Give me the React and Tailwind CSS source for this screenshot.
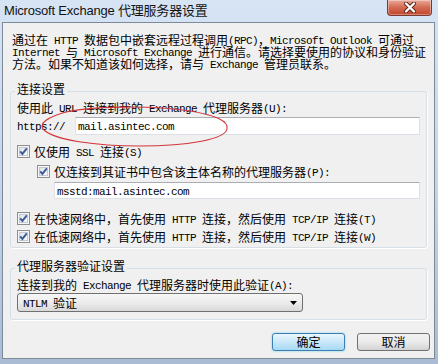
import React from "react"

const Mx = ({ t }) =>
  t.split(/([\x20-\x7e]+)/).map((s, i) =>
    i % 2 ? (
      <span key={i} className="font-['Liberation_Mono',monospace] text-[11px] leading-[0] align-[1px] tracking-[-0.6px]">
        {s}
      </span>
    ) : (
      s
    )
  )

function Check({ className = "" }) {
  return (
    <svg width="13" height="13" viewBox="0 0 13 13" className={"shrink-0 " + className}>
      <defs>
        <linearGradient id="cbg" x1="0" y1="0" x2="1" y2="1">
          <stop offset="0" stopColor="#dfe3e8" />
          <stop offset="1" stopColor="#fbfcfd" />
        </linearGradient>
      </defs>
      <rect x="0.5" y="0.5" width="12" height="12" fill="#f6f6f6" stroke="#8f8f8f" />
      <rect x="2.5" y="2.5" width="8" height="8" fill="url(#cbg)" stroke="#c3cad3" />
      <path d="M3.2 6.4 L5.4 8.9 L9.8 3.4" stroke="#3b5a98" strokeWidth="1.9" fill="none" />
    </svg>
  )
}

function CheckRow({ label, className = "" }) {
  return (
    <div className={"flex items-center h-[13px] leading-[12px] whitespace-nowrap " + className}>
      <Check />
      <span className="ml-[4px]">
        <Mx t={label} />
      </span>
    </div>
  )
}

function TextBox({ value, className = "" }) {
  return (
    <div
      className={
        "flex items-center bg-white border border-[#dbdfe6] border-t-[#abadb3] border-l-[#e2e3ea] pl-[2px] leading-[12px] " +
        className
      }
    >
      <span>
        <Mx t={value} />
      </span>
    </div>
  )
}

function Group({ title, children, className = "" }) {
  return (
    <fieldset
      className={
        "ml-[7px] w-[417px] px-[6px] border border-[#d5dfe5] rounded-[3px] shadow-[1px_1px_0_#ffffff] " + className
      }
    >
      <legend className="ml-[-2px] px-[2px] pb-[4px] leading-[12px]">{title}</legend>
      {children}
    </fieldset>
  )
}

export default function App() {
  return (
    <div className="relative w-[438px] h-[364px] overflow-hidden flex flex-col bg-linear-to-b from-[#d6e4f4] via-[#c3d6ec] to-[#a9bcd4] text-[12px] text-black font-['Noto_Sans_CJK_SC',sans-serif]">
      {/* title bar */}
      <div className="h-[22px] flex items-start justify-between shrink-0">
        <div className="min-w-0 pl-[4px] pt-[3px] text-[13px] leading-[15px] text-[#141414] tracking-[-0.2px] font-['Liberation_Sans','Noto_Sans_CJK_SC',sans-serif] whitespace-nowrap">
          Microsoft Exchange 代理服务器设置
        </div>
        <div className="shrink-0 mr-[6px] w-[45px] h-[16px] flex items-center justify-center rounded-b-[4px] border border-t-0 border-[#7b3a2e] bg-linear-to-b from-[#e9a99b] via-[#d36a52] to-[#c2452a] shadow-[inset_0_0_0_1px_rgba(255,255,255,0.35)]">
          <svg width="14" height="11" viewBox="0 0 14 11">
            <path d="M3 1.5 L11 9.5 M11 1.5 L3 9.5" stroke="#5a1e14" strokeWidth="4" strokeLinecap="round" />
            <path d="M3 1.5 L11 9.5 M11 1.5 L3 9.5" stroke="#ffffff" strokeWidth="2.4" strokeLinecap="round" />
          </svg>
        </div>
      </div>

      {/* body */}
      <div className="relative ml-[2px] w-[433px] h-[337px] border border-[#7f8a99] bg-[#f0f0f0] shrink-0">
        <div className="pt-[11px] pl-[9px] leading-[12px] whitespace-nowrap">
          <div>
            <Mx t="通过在 HTTP 数据包中嵌套远程过程调用(RPC)，Microsoft Outlook 可通过" />
          </div>
          <div>
            <Mx t="Internet 与 Microsoft Exchange 进行通信。请选择要使用的协议和身份验证" />
          </div>
          <div>
            <Mx t="方法。如果不知道该如何选择，请与 Exchange 管理员联系。" />
          </div>
        </div>

        <Group title="连接设置" className="mt-[13px] pb-[4px]">
          <div className="mt-[3px] leading-[12px] whitespace-nowrap">
            <Mx t="使用此 URL 连接到我的 Exchange 代理服务器(U):" />
          </div>
          <div className="mt-[3px] flex items-center">
            <span className="w-[58px] leading-[12px]">
              <Mx t="https://" />
            </span>
            <TextBox value="mail.asintec.com" className="w-[345px] h-[18px]" />
          </div>
          <CheckRow label="仅使用 SSL 连接(S)" className="mt-[10px]" />
          <CheckRow label="仅连接到其证书中包含该主体名称的代理服务器(P):" className="mt-[7px] ml-[20px]" />
          <TextBox value="msstd:mail.asintec.com" className="mt-[4px] ml-[37px] w-[366px] h-[17px]" />
          <CheckRow label="在快速网络中，首先使用 HTTP 连接，然后使用 TCP/IP 连接(T)" className="mt-[13px]" />
          <CheckRow label="在低速网络中，首先使用 HTTP 连接，然后使用 TCP/IP 连接(W)" className="mt-[5px]" />
        </Group>

        <Group title="代理服务器验证设置" className="mt-[12px] pb-[7px]">
          <div className="mt-[3px] leading-[12px] whitespace-nowrap">
            <Mx t="连接到我的 Exchange 代理服务器时使用此验证(A):" />
          </div>
          <div className="mt-[2px] w-[286px] h-[19px] flex items-center pl-[5px] pr-[5px] rounded-[3px] border border-[#707070] bg-linear-to-b from-[#f7f7f7] via-[#ececec] to-[#d9d9d9] leading-[12px]">
            <span className="flex-1">
              <Mx t="NTLM 验证" />
            </span>
            <svg width="7" height="4" viewBox="0 0 7 4">
              <path d="M0 0 H7 L3.5 4 Z" fill="#000" />
            </svg>
          </div>
        </Group>

        <div className="mt-[13px] pr-[4px] flex justify-end gap-[12px]">
          <button className="w-[73px] h-[18px] rounded-[3px] border border-[#3c7fb1] bg-linear-to-b from-[#eaf6fd] via-[#c9e8f9] to-[#a7d9f5] shadow-[0_0_2px_#5fc9f0] leading-[12px] text-[12px]">
            确定
          </button>
          <button className="w-[73px] h-[18px] rounded-[3px] border border-[#707070] bg-linear-to-b from-[#f2f2f2] via-[#ebebeb] to-[#d2d2d2] leading-[12px] text-[12px]">
            取消
          </button>
        </div>
      </div>

      {/* hand-drawn red ellipse */}
      <svg className="absolute left-0 top-0 pointer-events-none" width="438" height="364" viewBox="0 0 438 364">
        <path
          d="M62 113 C 90 106, 150 105, 190 111 C 215 115, 229 121, 227 129 C 225 139, 190 146, 140 146 C 95 146, 55 140, 44 130 C 38 124, 46 117, 70 111"
          fill="none"
          stroke="#d2353a"
          strokeWidth="1.1"
        />
      </svg>
    </div>
  )
}
